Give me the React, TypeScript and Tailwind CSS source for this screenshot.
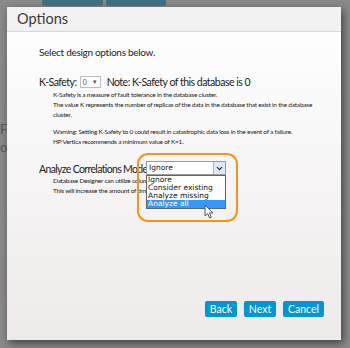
import { ChevronDown } from "lucide-react"

const options = ["Ignore", "Consider existing", "Analyze missing", "Analyze all"]

function Cursor() {
  return (
    <svg width="11" height="15" viewBox="0 0 11 15" className="absolute left-[204px] top-[204px]">
      <path d="M1 1 L1 12 L3.6 9.6 L5.6 14 L7.3 13.2 L5.4 8.9 L9 8.9 Z" fill="#fff" stroke="#444" strokeWidth="0.9" strokeLinejoin="round" />
    </svg>
  )
}

export default function App() {
  return (
    <div className="relative h-[348px] w-[350px] overflow-hidden bg-[#8a8a8a] font-['Lato',sans-serif]">
      {/* page behind the dialog */}
      <div className="absolute left-[42px] top-0 h-[6px] w-[61px] rounded-b-[2px] bg-[#3f6f82]" />
      <div className="absolute left-[106px] top-0 h-[6px] w-[60px] rounded-b-[2px] bg-[#3f6f82]" />
      <div className="absolute left-0 top-[123px] text-[13px] leading-none text-[#555]">F</div>
      <div className="absolute left-0 top-[141px] text-[13px] leading-none text-[#555]">o</div>

      <div className="pl-[7px] pt-[7px]">
        <div className="flex h-[333px] w-[334px] flex-col bg-gradient-to-b from-[#ffffff] to-[#eeeaea] shadow-[2px_3px_8px_rgba(0,0,0,0.55)]">
          <div className="flex h-[25px] items-center border-b border-[#d6d6d6] bg-[#f2f2f2] pl-[10px] text-[14.5px] text-[#3a3a3a]">
            Options
          </div>

          <div className="flex flex-1 flex-col pl-[32px] text-[#222]">
            <div className="mt-[13px] text-[10px] leading-[14px] tracking-[-0.3px]">Select design options below.</div>

            <div className="mt-[16px] flex items-center text-[10.5px] leading-[14px] tracking-[-0.5px]">
              <span>K-Safety:</span>
              <span className="ml-[3px] flex h-[12px] w-[21px] items-center justify-between border border-[#bdbdbd] bg-white px-[2px] text-[7px] tracking-normal text-[#555]">
                0
                <span className="text-[6px]">▼</span>
              </span>
              <span className="ml-[6px]">Note: K-Safety of this database is 0</span>
            </div>

            <div className="ml-[14px] mt-[1px] pr-[14px] text-[6.5px] leading-[10px] tracking-[-0.22px]">
              <div>K-Safety is a measure of fault tolerance in the database cluster.</div>
              <div>The value K represents the number of replicas of the data in the database that exist in the database cluster.</div>
              <div className="mt-[7px]">Warning: Setting K-Safety to 0 could result in catastrophic data loss in the event of a failure.</div>
              <div>HP Vertica recommends a minimum value of K=1.</div>
            </div>

            <div className="mt-[15px] text-[10.5px] leading-[14px] tracking-[-0.65px]">Analyze Correlations Mode</div>
            <div className="ml-[14px] text-[6.5px] leading-[10px] tracking-[-0.22px]">
              <div>Database Designer can utilize column correlations in projections.</div>
              <div>This will increase the amount of time Database Designer will run.</div>
            </div>

            <div className="mt-auto mb-[23px] mr-[17px] flex justify-end gap-[7px] text-[10.5px] text-white">
              <button className="h-[16px] w-[32px] rounded-[2px] bg-[#0096d6] leading-none">Back</button>
              <button className="h-[16px] w-[32px] rounded-[2px] bg-[#0096d6] leading-none">Next</button>
              <button className="h-[16px] w-[41px] rounded-[2px] bg-[#0096d6] leading-none">Cancel</button>
            </div>
          </div>
        </div>
      </div>

      {/* open select with highlight ring */}
      <div className="absolute left-[146px] top-[161px] flex h-[14px] w-[80px] items-center justify-between border border-[#9a9a9a] bg-white pl-[2px] font-['DejaVu_Sans',sans-serif] text-[7.5px] text-[#111]">
        Ignore
        <span className="flex h-[12px] w-[12px] items-center justify-center border-l border-[#9bb7d6] bg-[#dfe9f5]">
          <ChevronDown size={9} strokeWidth={3} className="text-[#222]" />
        </span>
      </div>
      <div className="absolute left-[146px] top-[175px] w-[80px] border border-[#666] bg-white font-['DejaVu_Sans',sans-serif] text-[7.5px] leading-[8px] text-[#111]">
        {options.map((o, i) => (
          <div key={o} className={i === 3 ? "bg-[#3399ff] px-[1px] text-white" : "px-[1px]"}>
            {o}
          </div>
        ))}
      </div>
      <div className="absolute left-[137px] top-[153px] h-[69px] w-[101px] rounded-[11px] border-2 border-[#f7941d]" />
      <Cursor />
    </div>
  )
}
